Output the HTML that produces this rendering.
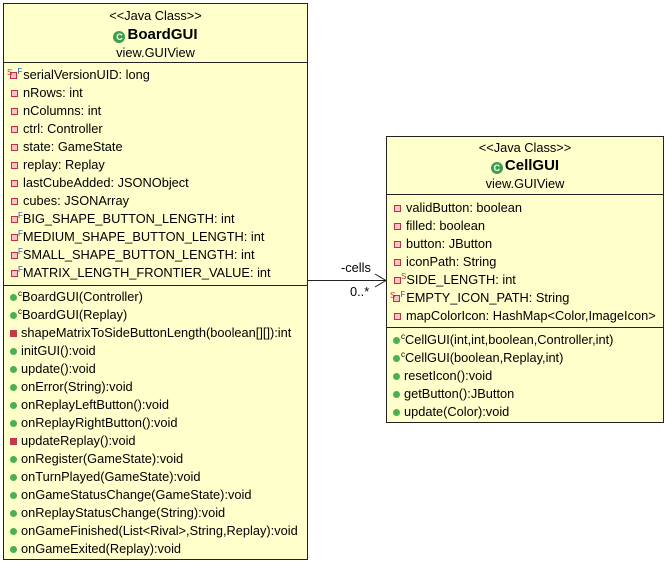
<!DOCTYPE html>
<html><head><meta charset="utf-8"><style>
body{margin:0;width:665px;height:562px;background:#fff;position:relative;font-family:"Liberation Sans",sans-serif;font-size:12.8px;color:#000;overflow:hidden}
.box{position:absolute;background:#ffffcc;border:1px solid #222}
.hr{position:absolute;left:0;right:0;height:0;border-top:1px solid #222}
.t{position:absolute;white-space:nowrap;line-height:14px;height:14px}
.t span{line-height:0}
.c{left:0;right:0;text-align:center}
.pf{display:inline-block;width:5px;height:5px;border:1px solid #c03040;background:#f8c0c8;margin:0 5px 1px 1px;vertical-align:middle}
.pm{display:inline-block;width:7px;height:7px;background:#c8384a;margin:0 4px 1px 0;vertical-align:middle}
.pu{display:inline-block;width:7px;height:7px;border-radius:50%;background:#4caf50;margin:0 4px 1px 0;vertical-align:middle}
.sup{font-size:8px;position:relative;top:-5px;margin-left:-3px}
.F{color:#3050c0;font-size:8px;position:relative;top:-5px}
.S{color:#c03040;font-size:8px;position:relative;top:-5px}
.cg{display:inline-block;width:12px;height:12px;border-radius:50%;background:#3ea04a;color:#fff;font-size:9px;line-height:12px!important;text-align:center;margin-right:2px;vertical-align:-1px;font-weight:bold}
</style></head><body>
<div class="box" style="left:3px;top:3px;width:303px;height:555px">
<div class="t c" style="top:5px">&lt;&lt;Java Class&gt;&gt;</div>
<div class="t c" style="top:23px;font-weight:bold;font-size:15px;line-height:16px"><span class="cg">C</span>BoardGUI</div>
<div class="t c" style="top:42px">view.GUIView</div>
<div class="hr" style="top:58px"></div>
<div class="t" style="left:3px;top:64px"><span class="S" style="top:-4px">S</span><span class="pf" style="margin:0 0 0 -2px"></span><span class="F" style="margin-right:1px">F</span>serialVersionUID: long</div>
<div class="t" style="left:6px;top:82px"><span class="pf"></span>nRows: int</div>
<div class="t" style="left:6px;top:100px"><span class="pf"></span>nColumns: int</div>
<div class="t" style="left:6px;top:118px"><span class="pf"></span>ctrl: Controller</div>
<div class="t" style="left:6px;top:136px"><span class="pf"></span>state: GameState</div>
<div class="t" style="left:6px;top:154px"><span class="pf"></span>replay: Replay</div>
<div class="t" style="left:6px;top:172px"><span class="pf"></span>lastCubeAdded: JSONObject</div>
<div class="t" style="left:6px;top:190px"><span class="pf"></span>cubes: JSONArray</div>
<div class="t" style="left:6px;top:208px"><span class="pf" style="margin-right:0"></span><span class="F">F</span>BIG_SHAPE_BUTTON_LENGTH: int</div>
<div class="t" style="left:6px;top:226px"><span class="pf" style="margin-right:0"></span><span class="F">F</span>MEDIUM_SHAPE_BUTTON_LENGTH: int</div>
<div class="t" style="left:6px;top:244px"><span class="pf" style="margin-right:0"></span><span class="F">F</span>SMALL_SHAPE_BUTTON_LENGTH: int</div>
<div class="t" style="left:6px;top:262px"><span class="pf" style="margin-right:0"></span><span class="F">F</span>MATRIX_LENGTH_FRONTIER_VALUE: int</div>
<div class="hr" style="top:281px"></div>
<div class="t" style="left:6px;top:286px"><span class="pu"></span><span class="sup">c</span>BoardGUI(Controller)</div>
<div class="t" style="left:6px;top:304px"><span class="pu"></span><span class="sup">c</span>BoardGUI(Replay)</div>
<div class="t" style="left:6px;top:322px"><span class="pm"></span>shapeMatrixToSideButtonLength(boolean[][]):int</div>
<div class="t" style="left:6px;top:340px"><span class="pu"></span>initGUI():void</div>
<div class="t" style="left:6px;top:358px"><span class="pu"></span>update():void</div>
<div class="t" style="left:6px;top:376px"><span class="pu"></span>onError(String):void</div>
<div class="t" style="left:6px;top:394px"><span class="pu"></span>onReplayLeftButton():void</div>
<div class="t" style="left:6px;top:412px"><span class="pu"></span>onReplayRightButton():void</div>
<div class="t" style="left:6px;top:430px"><span class="pm"></span>updateReplay():void</div>
<div class="t" style="left:6px;top:448px"><span class="pu"></span>onRegister(GameState):void</div>
<div class="t" style="left:6px;top:466px"><span class="pu"></span>onTurnPlayed(GameState):void</div>
<div class="t" style="left:6px;top:484px"><span class="pu"></span>onGameStatusChange(GameState):void</div>
<div class="t" style="left:6px;top:502px"><span class="pu"></span>onReplayStatusChange(String):void</div>
<div class="t" style="left:6px;top:520px"><span class="pu"></span>onGameFinished(List&lt;Rival&gt;,String,Replay):void</div>
<div class="t" style="left:6px;top:538px"><span class="pu"></span>onGameExited(Replay):void</div>
</div>

<div class="box" style="left:386px;top:136px;width:276px;height:285px">
<div class="t c" style="top:4px">&lt;&lt;Java Class&gt;&gt;</div>
<div class="t c" style="top:21px;font-weight:bold;font-size:15px;line-height:16px"><span class="cg">C</span>CellGUI</div>
<div class="t c" style="top:40px">view.GUIView</div>
<div class="hr" style="top:57px"></div>
<div class="t" style="left:6px;top:64px"><span class="pf"></span>validButton: boolean</div>
<div class="t" style="left:6px;top:82px"><span class="pf"></span>filled: boolean</div>
<div class="t" style="left:6px;top:100px"><span class="pf"></span>button: JButton</div>
<div class="t" style="left:6px;top:118px"><span class="pf"></span>iconPath: String</div>
<div class="t" style="left:6px;top:136px"><span class="pf" style="margin-right:0"></span><span class="S">S</span>SIDE_LENGTH: int</div>
<div class="t" style="left:3px;top:154px"><span class="S" style="top:-4px">S</span><span class="pf" style="margin:0 0 0 -2px"></span><span class="F" style="margin-right:1px">F</span>EMPTY_ICON_PATH: String</div>
<div class="t" style="left:6px;top:172px"><span class="pf"></span>mapColorIcon: HashMap&lt;Color,ImageIcon&gt;</div>
<div class="hr" style="top:190px"></div>
<div class="t" style="left:6px;top:196px"><span class="pu"></span><span class="sup">c</span>CellGUI(int,int,boolean,Controller,int)</div>
<div class="t" style="left:6px;top:214px"><span class="pu"></span><span class="sup">c</span>CellGUI(boolean,Replay,int)</div>
<div class="t" style="left:6px;top:232px"><span class="pu"></span>resetIcon():void</div>
<div class="t" style="left:6px;top:250px"><span class="pu"></span>getButton():JButton</div>
<div class="t" style="left:6px;top:268px"><span class="pu"></span>update(Color):void</div>
</div>

<svg style="position:absolute;left:0;top:0" width="665" height="562">
<line x1="307" y1="280.5" x2="386" y2="280.5" stroke="#222" stroke-width="1"/>
<polyline points="375,274 386,280.5 375,287" fill="none" stroke="#222" stroke-width="1"/>
</svg>
<div class="t" style="left:341px;top:261px">-cells</div>
<div class="t" style="left:350px;top:285px">0..*</div>
</body></html>
